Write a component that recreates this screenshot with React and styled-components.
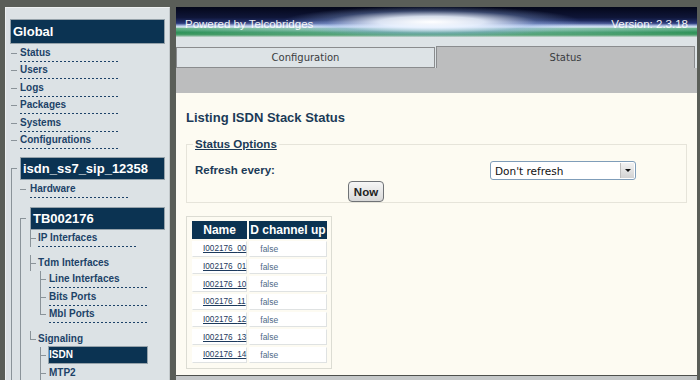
import styled, { createGlobalStyle, css } from 'styled-components'

const GlobalStyle = createGlobalStyle`
  html, body { margin:0; padding:0; }
  body {
    background:#5a5e58;
    font-family:"Liberation Sans", Arial, sans-serif;
    overflow:hidden;
  }
`

const Page = styled.div`
  display:flex;
  gap:6px;
  padding:7px 3px 0 5px;
  height:380px;
  box-sizing:border-box;
  overflow:hidden;
`

/* ---------- sidebar tree ---------- */

const Sidebar = styled.nav`
  width:165px;
  flex:none;
  box-sizing:border-box;
  background:#dce2e5;
  border-left:1px solid #eef1f2;
  border-top:1px solid #eef1f2;
  border-right:1px solid #c2c8cb;
  padding:11px 4px 0 0;
  overflow:hidden;
`

const Heading = styled.div`
  height:${p => p.$h}px;
  margin-left:${p => p.$ml || 0}px;
  box-sizing:border-box;
  display:flex;
  align-items:center;
  padding-left:2px;
  background:#0b3352;
  border:1px solid #95a2aa;
  color:#fff;
  font-size:13px;
  font-weight:bold;
`

const Tree = styled.ul`
  list-style:none;
  margin:${p => p.$top || 0}px 0 0 ${p => p.$shift || 0}px;
  padding:0;
`

const line = '#8a9399'

const Node = styled.li`
  position:relative;
  padding-left:${p => p.$pad}px;
  margin-top:${p => p.$gap || 0}px;

  &::before {
    content:'';
    position:absolute;
    left:0;
    top:${p => p.$mid}px;
    width:6px;
    border-top:1px solid ${line};
  }

  ${p => p.$rail && css`
    &::after {
      content:'';
      position:absolute;
      left:0;
      top:${p.$mid}px;
      bottom:0;
      border-left:1px solid ${line};
    }
  `}

  ${p => p.$kind && css`
    &::after {
      content:'';
      position:absolute;
      left:0;
      top:0;
      height:${p.$kind === 'end' ? p.$mid : p.$span}px;
      border-left:1px solid ${line};
    }
  `}
`

const Leaf = styled.a`
  display:block;
  width:98px;
  height:17.4px;
  box-sizing:border-box;
  padding-top:2px;
  line-height:12px;
  font-size:10px;
  font-weight:bold;
  color:#1c4268;
  text-decoration:none;
  white-space:nowrap;
  background:linear-gradient(to right, #1c4268 50%, transparent 50%) 0 16px / 4px 1px repeat-x;

  ${p => p.$active && css`
    height:16px;
    margin-bottom:1.4px;
    background:#0b3352;
    color:#fff;
    box-shadow:0 0 0 1px #95a2aa;
  `}
`

const Folder = styled.span`
  display:block;
  height:16px;
  box-sizing:border-box;
  padding-top:2px;
  line-height:12px;
  font-size:10px;
  font-weight:bold;
  color:#1c4268;
`

/* ---------- main panel ---------- */

const Main = styled.main`
  width:521px;
  flex:none;
  display:flex;
  flex-direction:column;
`

const Banner = styled.header`
  height:30px;
  box-sizing:border-box;
  display:flex;
  justify-content:space-between;
  padding:10px 9px 0;
  color:#ffffff;
  font-size:11.5px;
  line-height:14px;
  background:
    radial-gradient(ellipse 150px 16px at 49% 50%, rgba(255,255,255,1) 0%, rgba(235,243,255,.9) 35%, rgba(140,170,225,.35) 70%, transparent 100%),
    radial-gradient(ellipse 360px 8px at 50% 70%, rgba(210,225,250,.8), transparent 100%),
    linear-gradient(to bottom, #04071a 0%, #0f1638 35%, #28377a 55%, #a9bde0 63%, #e4eef6 67%, #4aa86d 71%, #1f8b4b 84%, #4c9f6d 93%, #c9d6d2 100%);
`

const BannerText = styled.span`
  opacity:.92;
`

const Strip = styled.div`
  height:9px;
  background:#dde3e6;
`

const Tabs = styled.div`
  display:flex;
  align-items:flex-end;
  gap:1px;
  height:22px;
  padding-right:2px;
  background:#dde3e6;
`

const Tab = styled.div`
  flex:1;
  box-sizing:border-box;
  display:flex;
  align-items:center;
  justify-content:center;
  font-family:"DejaVu Sans", Verdana, sans-serif;
  font-size:10px;
  color:#3a3c3e;
  border:1px solid #8a8c8e;
  height:21px;
  background:#dde3e6;

  ${p => p.$active && css`
    height:22px;
    border-bottom:none;
    background:#bcbdbe;
  `}
`

const Band = styled.div`
  height:25px;
  background:#bcbdbe;
`

const Content = styled.section`
  flex:1;
  background:#fdfbf2;
  padding:17px 10px 0;
`

const Footer = styled.div`
  height:4px;
  border-top:1px solid #4d504c;
  background:#c5c8c9;
`

const Title = styled.h2`
  margin:0;
  font-size:13px;
  line-height:16px;
  font-weight:bold;
  color:#1b3a57;
`

const Options = styled.fieldset`
  margin:11px 0 0;
  padding:0 6px 0;
  border:1px solid #e6e4da;
`

const Legend = styled.legend`
  padding:0 2px;
  font-size:11.5px;
  line-height:14px;
  font-weight:bold;
  color:#1b3a57;
  text-decoration:underline;
`

const Row = styled.div`
  display:flex;
  align-items:center;
  height:20px;
  margin-top:9px;
  padding-left:2px;
`

const Label = styled.span`
  width:295px;
  font-size:11.5px;
  font-weight:bold;
  color:#1b3a57;
`

const SelectWrap = styled.div`
  position:relative;
  width:146px;
  height:19px;
`

const Select = styled.select`
  appearance:none;
  width:100%;
  height:100%;
  box-sizing:border-box;
  border:1px solid #7f9db9;
  border-radius:3px;
  background:#fff;
  padding:0 0 0 4px;
  font-family:"DejaVu Sans", Verdana, sans-serif;
  font-size:10.5px;
  color:#111;
`

const Arrow = styled.span`
  position:absolute;
  right:2px;
  top:2px;
  width:14px;
  height:15px;
  box-sizing:border-box;
  background:linear-gradient(#f2f2f2, #d2d2d2);
  border-left:1px solid #bdbdbd;
  pointer-events:none;

  &::after {
    content:'';
    position:absolute;
    left:4px;
    top:6px;
    border-left:3px solid transparent;
    border-right:3px solid transparent;
    border-top:3px solid #111;
  }
`

const ButtonRow = styled.div`
  margin-top:1px;
  padding-left:155px;
`

const NowButton = styled.button`
  width:36px;
  height:21px;
  padding:0;
  border:1px solid #6f7276;
  border-radius:4px;
  background:linear-gradient(#f6f6f6, #d8d8d8);
  font-family:"Liberation Sans", Arial, sans-serif;
  font-size:11.5px;
  font-weight:bold;
  color:#222;
`

const Results = styled.div`
  width:fit-content;
  margin-top:13px;
  padding:2px 2px 3px 3px;
  border:1px solid #dcdcd3;
`

const Table = styled.table`
  border-spacing:2px;
`

const Th = styled.th`
  height:18px;
  box-sizing:border-box;
  padding:0 1px;
  background:#0b3352;
  color:#fff;
  font-size:12px;
  font-weight:bold;
  white-space:nowrap;
  text-align:center;
  min-width:${p => p.$min || 0}px;
`

const Td = styled.td`
  height:15.7px;
  box-sizing:border-box;
  padding:0 0 0 10px;
  background:#fff;
  border:1px solid;
  border-color:#fff #dfe2e2 #dfe2e2 #fff;
  line-height:12px;
  white-space:nowrap;
  font-size:8.5px;
  color:#4f6a88;
`

const StackLink = styled.a`
  font-size:8.2px;
  color:#1d3a5c;
  text-decoration:underline;
`

const globalLinks = ['Status', 'Users', 'Logs', 'Packages', 'Systems', 'Configurations']
const stacks = ['00', '01', '10', '11', '12', '13', '14']

export default function App() {
  return (
    <>
      <GlobalStyle />
      <Page>
        <Sidebar>
          <Heading $h={25} $ml={4}>Global</Heading>
          <Tree $shift={5} $top={1}>
            {globalLinks.map(l => (
              <Node key={l} $pad={9} $mid={8}><Leaf href="#">{l}</Leaf></Node>
            ))}
            <Node $pad={9} $mid={11.5} $gap={7.6} $rail>
              <Heading $h={23}>isdn_ss7_sip_12358</Heading>
              <Tree $top={1}>
                <Node $pad={10} $mid={8}><Leaf href="#">Hardware</Leaf></Node>
                <Node $pad={10} $mid={11.5} $gap={8.6} $rail>
                  <Heading $h={23}>TB002176</Heading>
                  <Tree>
                    <Node $pad={8} $mid={8} $kind="tee" $span={17.4}>
                      <Leaf href="#">IP Interfaces</Leaf>
                    </Node>
                    <Node $pad={8} $mid={8} $kind="tee" $span={16.5} $gap={7.6}>
                      <Folder>Tdm Interfaces</Folder>
                      <Tree $shift={2} $top={0.5}>
                        <Node $pad={9} $mid={8} $kind="tee" $span={17.4}><Leaf href="#">Line Interfaces</Leaf></Node>
                        <Node $pad={9} $mid={8} $kind="tee" $span={17.4}><Leaf href="#">Bits Ports</Leaf></Node>
                        <Node $pad={9} $mid={8} $kind="end"><Leaf href="#">Mbl Ports</Leaf></Node>
                      </Tree>
                    </Node>
                    <Node $pad={8} $mid={8} $kind="end" $gap={7.3}>
                      <Folder>Signaling</Folder>
                      <Tree $shift={2} $top={0.5}>
                        <Node $pad={9} $mid={8} $kind="tee" $span={17.4}><Leaf href="#" $active>ISDN</Leaf></Node>
                        <Node $pad={9} $mid={8} $kind="tee" $span={17.4}><Leaf href="#">MTP2</Leaf></Node>
                      </Tree>
                    </Node>
                  </Tree>
                </Node>
              </Tree>
            </Node>
          </Tree>
        </Sidebar>

        <Main>
          <Banner>
            <BannerText>Powered by Telcobridges</BannerText>
            <BannerText>Version: 2.3.18</BannerText>
          </Banner>
          <Strip />
          <Tabs>
            <Tab>Configuration</Tab>
            <Tab $active>Status</Tab>
          </Tabs>
          <Band />
          <Content>
            <Title>Listing ISDN Stack Status</Title>
            <Options>
              <Legend>Status Options</Legend>
              <Row>
                <Label>Refresh every:</Label>
                <SelectWrap>
                  <Select defaultValue="0">
                    <option value="0">Don't refresh</option>
                    <option value="5">5 seconds</option>
                    <option value="10">10 seconds</option>
                  </Select>
                  <Arrow />
                </SelectWrap>
              </Row>
              <ButtonRow>
                <NowButton type="button">Now</NowButton>
              </ButtonRow>
            </Options>
            <Results>
              <Table>
                <thead>
                  <tr>
                    <Th $min={55}>Name</Th>
                    <Th>D channel up</Th>
                  </tr>
                </thead>
                <tbody>
                  {stacks.map(s => (
                    <tr key={s}>
                      <Td><StackLink href="#">I002176_{s}</StackLink></Td>
                      <Td>false</Td>
                    </tr>
                  ))}
                </tbody>
              </Table>
            </Results>
          </Content>
          <Footer />
        </Main>
      </Page>
    </>
  )
}
